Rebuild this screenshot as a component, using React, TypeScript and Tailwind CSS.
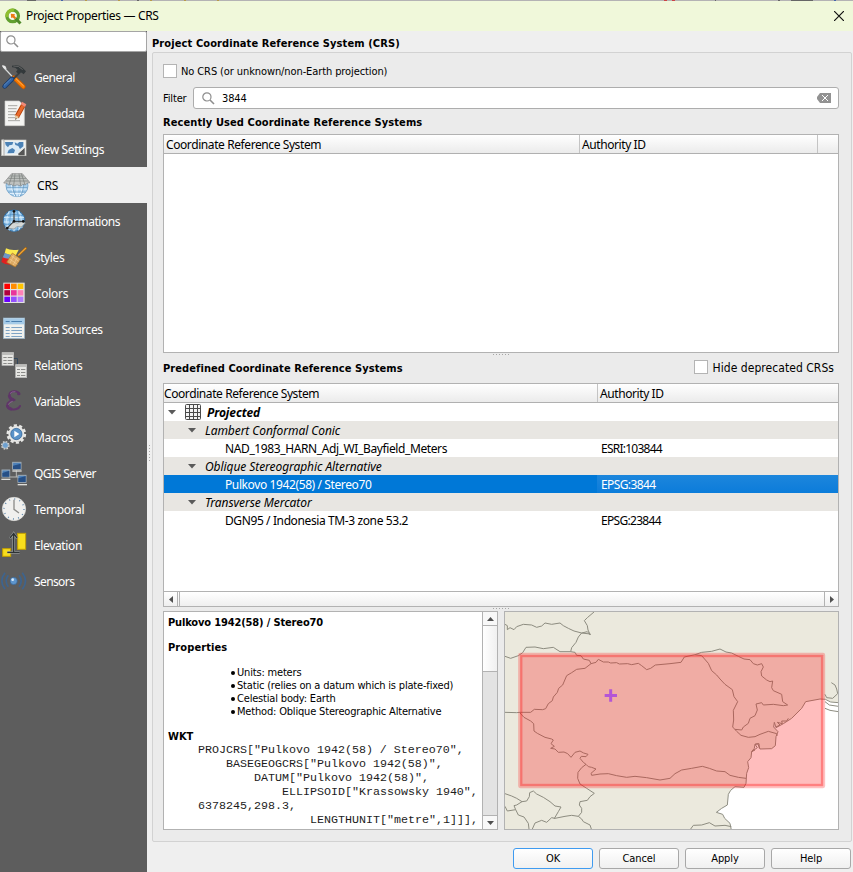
import React from 'react';
import clsx from 'clsx';

const UI = "font-['Noto_Sans',sans-serif]";
const TAHOMA = "font-['DejaVu_Sans_Condensed','DejaVu_Sans',sans-serif]";

/* ---------- sidebar icons, drawn on a 90x108 grid ---------- */

const GeneralIcon = () => (
  <>
    <path d="M10 24 L42 58" stroke="#d9dcdc" strokeWidth="4" />
    <path d="M7 18 l9 3 l4 8 l-5 1 l-8 -7z" fill="#e8e8e8" />
    <path d="M42 56 L70 83" stroke="#c65a00" strokeWidth="14" strokeLinecap="round" />
    <path d="M42 56 L70 83" stroke="#f57900" strokeWidth="9" strokeLinecap="round" />
    <path d="M46 57 L71 81" stroke="#ffb35c" strokeWidth="3" />
    <path d="M62 38 L40 60" stroke="#3c4244" strokeWidth="6" />
    <path d="M36 20 Q54 14 68 27 L78 37 L71 46 L62 39 L56 45 L48 38 L53 32 Q45 24 36 25z" fill="#33393b" />
    <path d="M40 21 Q56 18 68 32" fill="none" stroke="#666" strokeWidth="3" />
    <path d="M36 60 L14 82" stroke="#173a6d" strokeWidth="14" strokeLinecap="round" />
    <path d="M36 60 L14 82" stroke="#3465a4" strokeWidth="9" strokeLinecap="round" />
    <path d="M33 59 L12 79" stroke="#729fcf" strokeWidth="2" />
  </>
);

const MetadataIcon = () => (
  <>
    <path d="M15 18 H58 L73 34 V92 H15z" fill="#f4f4f2" stroke="#cfcfcb" strokeWidth="2" />
    <path d="M24 32H52M24 41H50M24 50H49M24 59H47M24 68H58M24 77H60" stroke="#a8a8a4" strokeWidth="3" />
    <path d="M70 30 L50 66" stroke="#b23c00" strokeWidth="14" />
    <path d="M69 32 L52 63" stroke="#e8692c" strokeWidth="9" />
    <path d="M66 20 L79 28 L75 36 L62 28z" fill="#f08a78" />
    <path d="M45 59 L57 66 L47 74z" fill="#e8c79a" />
    <path d="M47 69 L50 71 L46 75z" fill="#222" />
  </>
);

const ViewIcon = () => (
  <>
    <rect x="5" y="27" width="73" height="47" fill="#f2f2ef" stroke="#c8c8c4" strokeWidth="2" />
    <rect x="14" y="32" width="57" height="36" fill="#dcebf6" />
    <path d="M15 33 H40 L37 41 L28 43 L24 49 L17 42z" fill="#4b82b6" />
    <path d="M26 57 L37 51 L45 57 L42 66 L22 67z" fill="#4b82b6" />
    <path d="M44 34 L52 38 L58 33 H70 V46 L60 54 L55 45 L46 42z" fill="#4b82b6" />
    <path d="M54 68 L74 50 V73 H56z" fill="#555" />
    <path d="M54 68 L58 57 L74 50z" fill="#eaeae6" />
    <path d="M5 27 Q12 22 12 30 V75" fill="none" stroke="#aaa" strokeWidth="3" />
  </>
);

const CrsIcon = () => (
  <>
    <circle cx="51" cy="56" r="33" fill="#a9d0ee" stroke="#5d93bd" strokeWidth="2" />
    <path d="M51 45V89M36 45Q32 70 45 88M66 45Q70 70 57 88M22 66H80M29 79H73" fill="none" stroke="#e9f5ff" strokeWidth="3" />
    <path d="M39 45Q36 70 48 88M69 45Q73 70 60 88M20 62H82M26 75H76" fill="none" stroke="#5d93bd" strokeWidth="2" />
    <path d="M35 20 H67 L90 47 Q80 46 76 54 Q68 49 62 57 Q51 50 41 57 Q34 49 26 54 Q20 46 11 48z" fill="#bfc2c0" stroke="#808080" strokeWidth="2" />
    <path d="M31 27H71M25 34H78M18 42H85M45 20L41 56M57 20L62 56M38 20L27 53M64 20L75 53" fill="none" stroke="#777b78" strokeWidth="2" />
  </>
);

const TransformIcon = () => (
  <>
    <circle cx="42" cy="53" r="32" fill="#8fc1e8" stroke="#2f6ea5" strokeWidth="3" />
    <path d="M12 43H72M11 57H73M16 72H68M42 21V85M28 24Q12 53 28 82M56 24Q72 53 56 82" fill="none" stroke="#d6ecfb" strokeWidth="3" />
    <path d="M14 38Q42 30 70 38M14 64H70M35 22Q24 53 35 84M50 22Q62 53 50 84" fill="none" stroke="#4b8cc2" strokeWidth="2" />
    <path d="M25 76 Q34 54 52 60 Q64 54 76 60 L64 72 Q50 66 42 78z" fill="#d5d8d6" stroke="#8b8f8c" strokeWidth="2" />
    <path d="M42 24V55L70 55M42 55L22 75" fill="none" stroke="#222" strokeWidth="3" />
    <circle cx="42" cy="25" r="4" fill="#111" />
    <circle cx="42" cy="55" r="4" fill="#111" />
    <circle cx="70" cy="55" r="4" fill="#111" />
    <circle cx="22" cy="75" r="4" fill="#111" />
  </>
);

const StylesIcon = () => (
  <>
    <path d="M18 28 Q32 36 56 32 L46 52 Q28 48 14 43z" fill="#fce94f" />
    <path d="M14 42 Q26 48 42 48 L36 64 Q20 62 8 56z" fill="#6d97c7" />
    <path d="M8 55 Q20 62 36 58 L30 77 Q14 77 4 69z" fill="#e02020" />
    <path d="M56 48 L77 28" stroke="#a86100" strokeWidth="7" strokeLinecap="round" />
    <path d="M56 48 L77 28" stroke="#e8a33d" strokeWidth="4" strokeLinecap="round" />
    <path d="M37 42 L62 60 L46 84 L20 70z" fill="#dca962" stroke="#b07520" strokeWidth="2" />
    <path d="M34 50 L56 67M29 60L52 76M42 48L30 72M51 56L40 78" stroke="#f4cf94" strokeWidth="2" />
  </>
);

const swatches = ['#ff0000', '#ff8c00', '#ffc400', '#b00040', '#e8369b', '#ff80b8', '#6a00ff', '#9450ff', '#b07cff'];

const ColorsIcon = () => (
  <>
    <rect x="10" y="23" width="64" height="61" fill="#e3e3e0" />
    {swatches.map((c, i) => (
      <rect key={c} x={13 + (i % 3) * 20} y={26 + Math.floor(i / 3) * 19.5} width="17" height="16" fill={c} />
    ))}
  </>
);

const DataIcon = () => (
  <>
    <rect x="10" y="21" width="64" height="62" fill="#f0f1ee" stroke="#8ea8be" strokeWidth="2" />
    <rect x="11" y="22" width="62" height="18" fill="#a5cbe8" />
    <path d="M17 31.500H29M34 31.500H66" stroke="#4b80b0" strokeWidth="3" />
    <path d="M17 49.500H29M17 58.500H29M17 67.500H29M17 76.500H29M34 49.500H66M34 58.500H66M34 67.500H66M34 76.500H66" stroke="#7ea3c4" strokeWidth="3" />
  </>
);

const RelationsIcon = () => (
  <>
    <path d="M40 34.500H52.500V53" fill="none" stroke="#33475a" strokeWidth="3" />
    <rect x="6" y="17" width="35" height="38" fill="#e6e6e3" stroke="#bbb" strokeWidth="2" />
    <path d="M6 20H40" stroke="#bcbcba" strokeWidth="8" />
    <path d="M10 31.500H20M10 40.500H20M10 49.500H20M23 31.500H37M23 40.500H37M23 49.500H37" stroke="#8a8a88" strokeWidth="3" />
    <rect x="47" y="53" width="33" height="39" fill="#e6e6e3" stroke="#bbb" strokeWidth="2" />
    <path d="M47 56H80" stroke="#bcbcba" strokeWidth="8" />
    <path d="M51 67.500H60M51 76.500H60M51 85.500H60M63 67.500H76M63 76.500H76M63 85.500H76" stroke="#8a8a88" strokeWidth="3" />
  </>
);

const VariablesIcon = () => (
  <>
    <path d="M58 33C54 21 28 21 28 37C28 48 37 51 46 51C34 51 22 56 22 67C22 83 54 83 60 69" fill="none" stroke="#5f3568" strokeWidth="6" strokeLinecap="round" />
    <path d="M28 37C28 46 35 49 41 50M22 66C22 73 28 77 36 79" fill="none" stroke="#5f3568" strokeWidth="9" />
    <circle cx="56" cy="32" r="5" fill="#5f3568" />
    <path d="M30 32Q36 25 46 26M25 65Q28 57 38 55" fill="none" stroke="#9a6ba3" strokeWidth="2" />
  </>
);

const MacrosIcon = () => (
  <>
    <circle cx="49" cy="45" r="26" fill="none" stroke="#e8e8e6" strokeWidth="7" strokeDasharray="9.5 6.8" />
    <circle cx="49" cy="45" r="20" fill="#4c86bd" stroke="#e8e8e6" strokeWidth="8" />
    <circle cx="49" cy="45" r="17" fill="#5b93c8" stroke="#2d5f94" strokeWidth="2" />
    <path d="M43 35L58 45L43 55z" fill="#fff" />
    <circle cx="16" cy="79" r="11" fill="none" stroke="#d8d8d6" strokeWidth="4" strokeDasharray="5 3.6" />
    <circle cx="16" cy="79" r="9" fill="#6ea0cf" stroke="#d8d8d6" strokeWidth="2" />
  </>
);

const ServerIcon = () => (
  <>
    <path d="M49 46V66M26 66H60" stroke="#b8b8b5" strokeWidth="3" />
    <rect x="38" y="22" width="25" height="21" fill="#4d81b9" stroke="#9dabb7" strokeWidth="3" />
    <path d="M39 32L62 26V42H39z" fill="#264f86" />
    <path d="M37 48H65" stroke="#dededb" strokeWidth="4" />
    <rect x="6" y="45" width="23" height="21" fill="#4d81b9" stroke="#9dabb7" strokeWidth="3" />
    <path d="M7 54L28 47V65H7z" fill="#264f86" />
    <path d="M4 73H31" stroke="#dededb" strokeWidth="4" />
    <rect x="54" y="61" width="24" height="21" fill="#4d81b9" stroke="#9dabb7" strokeWidth="3" />
    <path d="M55 70L77 63V81H55z" fill="#264f86" />
    <path d="M53 89H81" stroke="#dededb" strokeWidth="4" />
  </>
);

const TemporalIcon = () => (
  <>
    <circle cx="42" cy="54" r="35" fill="#f0f0ee" stroke="#dcdcda" strokeWidth="2" />
    <circle cx="42" cy="54" r="30" fill="none" stroke="#5b86ac" strokeWidth="4" strokeDasharray="3 12.7" />
    <path d="M42 26V55L57 66" fill="none" stroke="#8d8d8a" strokeWidth="4" />
  </>
);

const ElevationIcon = () => (
  <>
    <rect x="53" y="19" width="24" height="48" fill="#f8de1c" stroke="#c4a000" strokeWidth="3" />
    <rect x="8" y="65" width="24" height="23" fill="#f8de1c" stroke="#c4a000" strokeWidth="3" />
    <path d="M41 76V22M30 34L41 19L51 34M22 76H59" fill="none" stroke="#a5a9a9" strokeWidth="7" />
    <path d="M41 76V20M30 33L41 19L51 33M22 76H59" fill="none" stroke="#2e3436" strokeWidth="4" />
  </>
);

const SensorsIcon = () => (
  <>
    <circle cx="41" cy="54" r="11" fill="#5e95cc" stroke="#355f8c" strokeWidth="2" />
    <circle cx="38" cy="50" r="4" fill="#d8ebfb" />
    <path d="M25 37Q12 54 25 71M57 37Q70 54 57 71M15 29Q-4 54 15 79M67 29Q86 54 67 79" fill="none" stroke="#3d648f" strokeWidth="5" />
  </>
);

const sections = [
  { label: 'General', Icon: GeneralIcon, cls: 'tracking-[-0.5px]' },
  { label: 'Metadata', Icon: MetadataIcon, cls: 'tracking-[-0.45px]' },
  { label: 'View Settings', Icon: ViewIcon, cls: 'tracking-[-0.37px]' },
  { label: 'CRS', Icon: CrsIcon, cls: 'tracking-[-0.1px]' },
  { label: 'Transformations', Icon: TransformIcon, cls: 'tracking-[-0.45px]' },
  { label: 'Styles', Icon: StylesIcon, cls: 'tracking-[-0.4px]' },
  { label: 'Colors', Icon: ColorsIcon, cls: 'tracking-[-0.3px]' },
  { label: 'Data Sources', Icon: DataIcon, cls: 'tracking-[-0.45px]' },
  { label: 'Relations', Icon: RelationsIcon, cls: 'tracking-[-0.4px]' },
  { label: 'Variables', Icon: VariablesIcon, cls: 'tracking-[-0.6px]' },
  { label: 'Macros', Icon: MacrosIcon, cls: 'tracking-[-0.3px]' },
  { label: 'QGIS Server', Icon: ServerIcon, cls: 'tracking-[-0.55px]' },
  { label: 'Temporal', Icon: TemporalIcon, cls: 'tracking-[-0.35px]' },
  { label: 'Elevation', Icon: ElevationIcon, cls: 'tracking-[-0.35px]' },
  { label: 'Sensors', Icon: SensorsIcon, cls: 'tracking-[-0.6px]' },
];

const SearchIcon = () => (
  <svg width="13" height="13" viewBox="0 0 13 13" fill="none" stroke="#8e8e8e" strokeWidth="1.2">
    <circle cx="4.9" cy="4.9" r="4.1" />
    <path d="M8 8L12 12" strokeWidth="1.6" />
  </svg>
);

const Checkbox = () => <span className="block size-[14px] shrink-0 border border-[#b4b4b4] bg-white" />;

const Sidebar = () => (
  <aside className="flex w-[147px] shrink-0 flex-col bg-[#5d5d5d]">
    <div className="flex h-[21px] items-center rounded-[2px] border border-[#a5a5a5] bg-white pl-[5px]">
      <SearchIcon />
    </div>
    <nav className="pt-[7px]">
      {sections.map(({ label, Icon, cls }) => (
        <div
          key={label}
          className={clsx('flex h-9 items-center', label === 'CRS' ? 'bg-[#efefef] text-black' : 'text-white')}
        >
          <svg width="30" height="36" viewBox="0 0 90 108" className="shrink-0">
            <Icon />
          </svg>
          <span className={clsx('whitespace-nowrap pt-0.5 text-[12px]', cls, label === 'CRS' ? 'pl-[7px]' : 'pl-1')}>{label}</span>
        </div>
      ))}
    </nav>
  </aside>
);

const HEADER = 'flex h-[19px] shrink-0 items-center border-b border-[#b0b0b0] bg-linear-to-b from-white to-[#ebebeb] text-[12px] tracking-[-0.41px]';

const RecentTable = () => (
  <div className="h-[219px] border border-[#b2b2b2] bg-white">
    <div className={HEADER}>
      <span className="w-[416px] self-stretch border-r border-[#c4c4c4] pl-0.5 leading-[19px]">Coordinate Reference System</span>
      <span className="w-[238px] self-stretch border-r border-[#c4c4c4] pl-0.5 leading-[19px]">Authority ID</span>
    </div>
  </div>
);

interface CrsRow {
  name: string;
  kind: 'root' | 'group' | 'leaf';
  id?: string;
  idCls?: string;
  selected?: boolean;
}

const rows: CrsRow[] = [
  { name: 'Projected', kind: 'root' },
  { name: 'Lambert Conformal Conic', kind: 'group' },
  { name: 'NAD_1983_HARN_Adj_WI_Bayfield_Meters', kind: 'leaf', id: 'ESRI:103844', idCls: 'tracking-[-0.75px]' },
  { name: 'Oblique Stereographic Alternative', kind: 'group' },
  { name: 'Pulkovo 1942(58) / Stereo70', kind: 'leaf', id: 'EPSG:3844', idCls: 'tracking-[-0.6px]', selected: true },
  { name: 'Transverse Mercator', kind: 'group' },
  { name: 'DGN95 / Indonesia TM-3 zone 53.2', kind: 'leaf', id: 'EPSG:23844', idCls: 'tracking-[-0.7px]' },
];

const Caret = () => (
  <svg width="8" height="5" viewBox="0 0 8 5" className="shrink-0">
    <path d="M0 0H8L4 4.6z" fill="#5a5a5a" />
  </svg>
);

const GridIcon = () => (
  <svg width="16" height="16" viewBox="0 0 16 16" fill="none" stroke="#4a4a4a">
    <rect x="0.5" y="0.5" width="15" height="15" rx="1" fill="#f4f4f4" />
    <path d="M4.500 0V16M8.500 0V16M12.500 0V16M0 4.500H16M0 8.500H16M0 12.500H16" />
  </svg>
);

const Row = ({ row }: { row: CrsRow }) => (
  <div
    className={clsx(
      'flex h-[18px] items-center whitespace-nowrap text-[12px]',
      row.kind === 'group' && 'bg-[#e8e6e2]',
      row.selected ? 'bg-[#0078d7] text-white' : 'text-black',
    )}
  >
    <div className="flex w-[433px] items-center">
      {row.kind === 'root' && (
        <div className="flex items-center pl-1">
          <Caret />
          <span className="ml-[9px]"><GridIcon /></span>
          <span className="ml-[6px] pt-0.5 font-bold italic tracking-[-0.1px]">{row.name}</span>
        </div>
      )}
      {row.kind === 'group' && (
        <div className="flex items-center pl-[24px]">
          <Caret />
          <span className="ml-[9px] pt-0.5 italic tracking-[-0.07px]">{row.name}</span>
        </div>
      )}
      {row.kind === 'leaf' && <span className="pl-[61px] pt-0.5 tracking-[-0.39px]">{row.name}</span>}
    </div>
    <div className={clsx('flex-1 self-stretch pl-1 leading-[20px]', row.idCls, row.selected && 'bg-linear-to-b from-[#1c86dc] to-[#0b7cda]')}>
      {row.id}
    </div>
  </div>
);

const PredefinedTable = () => (
  <div className="flex h-[224px] flex-col border border-[#b2b2b2] bg-white">
    <div className={HEADER}>
      <span className="w-[434px] self-stretch border-r border-[#c4c4c4] leading-[19px]">Coordinate Reference System</span>
      <span className="pl-0.5 leading-[19px]">Authority ID</span>
    </div>
    <div className="flex-1">
      {rows.map((row) => (
        <Row key={row.name} row={row} />
      ))}
    </div>
    <div className="flex h-[15px] border-t border-[#b2b2b2] bg-linear-to-b from-white to-[#efefef]">
      <div className="flex w-[14px] items-center justify-center border-r border-[#b2b2b2]">
        <svg width="4" height="7" viewBox="0 0 4 7"><path d="M4 0V7L0 3.500z" fill="#505050" /></svg>
      </div>
      <div className="ml-px flex-1 border-l border-[#b2b2b2]" />
      <div className="flex w-[14px] items-center justify-center border-l border-[#b2b2b2]">
        <svg width="4" height="7" viewBox="0 0 4 7"><path d="M0 0V7L4 3.500z" fill="#505050" /></svg>
      </div>
    </div>
  </div>
);

const Grip = ({ className }: { className: string }) => (
  <div className={clsx('flex gap-0.5', className)}>
    {[0, 1, 2, 3, 4, 5].map((n) => (
      <span key={n} className="size-px bg-[#a6a6a6]" />
    ))}
  </div>
);

const wkt = [
  { text: 'PROJCRS["Pulkovo 1942(58) / Stereo70",', pad: 'pl-0' },
  { text: 'BASEGEOGCRS["Pulkovo 1942(58)",', pad: 'pl-[28px]' },
  { text: 'DATUM["Pulkovo 1942(58)",', pad: 'pl-[56px]' },
  { text: 'ELLIPSOID["Krassowsky 1940",', pad: 'pl-[84px]' },
  { text: '6378245,298.3,', pad: 'pl-0' },
  { text: 'LENGTHUNIT["metre",1]]],', pad: 'pl-[112px]' },
];

const Details = () => (
  <div className="flex w-[335px] shrink-0 border border-[#b2b2b2] bg-white">
    <div className={clsx('min-w-0 flex-1 overflow-hidden whitespace-nowrap pl-1 text-[11px] leading-[13px]', TAHOMA)}>
      <p className="pt-[4px] font-bold tracking-[-0.15px]">Pulkovo 1942(58) / Stereo70</p>
      <p className="pt-[12px] font-bold tracking-[0.1px]">Properties</p>
      <ul className="pl-[63px] pt-[12px] tracking-[-0.18px]">
        {['Units: meters', 'Static (relies on a datum which is plate-fixed)', 'Celestial body: Earth', 'Method: Oblique Stereographic Alternative'].map((t) => (
          <li key={t} className="flex items-center gap-[2px]">
            <span className="size-1 rounded-full bg-black" />
            <span>{t}</span>
          </li>
        ))}
      </ul>
      <p className="pt-[12px] font-bold">WKT</p>
      <div className="pl-[30px] font-['Liberation_Mono',monospace] text-[11.67px] leading-[14px] text-[#1c1c1c]">
        {wkt.map((l) => (
          <p key={l.text} className={l.pad}>{l.text}</p>
        ))}
      </div>
    </div>
    <div className="flex w-[15px] shrink-0 flex-col border-l border-[#b2b2b2] bg-[#e3e3e3]">
      <div className="flex h-[14px] items-center justify-center border-b border-[#b2b2b2] bg-[#f8f8f8]">
        <svg width="7" height="4" viewBox="0 0 7 4"><path d="M0 4H7L3.500 0z" fill="#505050" /></svg>
      </div>
      <div className="h-[46px] border-b border-[#b2b2b2] bg-linear-to-r from-white to-[#f0f0f0]" />
      <div className="flex-1" />
      <div className="flex h-[14px] items-center justify-center border-t border-[#b2b2b2] bg-[#f8f8f8]">
        <svg width="7" height="4" viewBox="0 0 7 4"><path d="M0 0H7L3.500 4z" fill="#505050" /></svg>
      </div>
    </div>
  </div>
);

/* Extent preview: land, borders, Black Sea and the CRS bounds on top */
const ExtentMap = () => (
  <div className="w-[335px] shrink-0 border border-[#b2b2b2]">
    <svg width="333" height="217" viewBox="15 21 999 651" className="block">
      <rect x="0" y="0" width="1030" height="700" fill="#ebe9dd" />
      <path
        transform="translate(510 0)"
        d="M520 300L505 293L482 291L466 283L450 282L407 290L395 310L365 340L340 356L318 368L313 352L311 366L324 380L318 395L316 422L305 431L270 432L263 416L255 418L253 430L245 440L243 458L233 470L236 488L230 505L228 535L222 547L195 545L182 556L175 568L172 600L155 610L139 622L158 628L164 640L180 655L184 675L520 680z"
        fill="#fff"
        stroke="#8f8f84"
        strokeWidth="3"
      />
      <g fill="none" stroke="#8d8c80" strokeWidth="3" strokeLinejoin="round">
        <path d="M15 58L22 62L22 74L30 68L42 74L50 65L70 58L95 60L110 67L125 63L135 54L155 58L180 54L190 62L205 70L222 78L245 84L262 80L271 90L264 75L262 62L253 47L262 38L282 21" />
        <path d="M15 154L32 160L55 152L68 143L78 127L105 126L130 131L160 127L180 140L212 140L215 128L228 112L235 96L245 84L271 87" />
        <path d="M212 140L225 142L230 151L243 152L250 162L268 166L273 176L288 172L295 163L310 171L325 171L332 174L350 173L358 177L383 176L395 179L415 175L425 182L440 194L452 190L466 180L510 176L543 172L553 156L585 149" />
        <path d="M273 176L255 190L230 193L215 203L200 212L188 240L176 250L172 262L160 276L157 287L145 296L137 311L128 314L103 313L92 322L60 322L50 323L15 322" />
        <path d="M60 324L72 337L92 348L101 356L102 378L112 385L135 397L155 402L160 405L153 416L163 424L152 430L165 432L175 442L192 441L203 446L213 457L225 442L240 438L251 444L264 448L258 455L244 454L240 460L250 472L258 478L265 485L275 487L288 492L273 505L275 511L300 507L325 506L350 512L380 517L405 514L440 518L480 525L510 520L525 506L545 495L575 490L607 484L628 490L650 498L675 500L690 511L715 517L738 520" />
        <path d="M258 478L245 488L234 502L233 520L240 537L260 550L283 565L270 575L262 586L240 590L238 600L245 610L245 622L235 634L215 631L195 634L165 640L155 638L140 652L125 646L105 654L97 672" />
        <path d="M235 634L245 642L250 650L270 660L274 672" />
        <path d="M15 566L35 573L50 580L66 590L80 588L88 575L89 563L100 558L110 567L130 577L150 590L165 603L183 606L175 620L162 642M66 590L50 600L42 602L47 614L55 630L72 636L85 655L87 672M15 604L22 618L47 614" />
        <g transform="translate(510 0)">
          <path d="M75 149L95 142L125 139L150 132L168 141L185 144L205 154L222 162L240 164L250 176L262 180L275 176L280 186L273 200L275 213L290 225L300 230L308 228L305 248L310 257L335 268L338 290L353 300L340 302L310 298L280 300L275 293L258 297L262 315L255 332L240 340L235 355L220 366L215 375L195 373" />
          <path d="M75 149L95 152L115 175L125 197L140 210L150 222L165 238L187 254L192 275L203 290L190 316L191 345L188 366L200 379L213 391L235 397L255 395L270 388L295 379L320 386L322 392" />
          <path d="M318 366L330 360L322 352L337 356L335 348L350 348L355 340M255 435L245 440L262 428L255 418L267 416L268 430M484 233L495 240L500 252L503 266L488 280L470 278L465 268M465 290L478 300L505 304M465 310L480 316L505 320" />
          <path d="M62 672L70 661L95 660L118 653L135 663L165 661L184 665" />
        </g>
      </g>
      <rect x="60" y="149" width="910" height="395" rx="2" fill="#ff0000" fillOpacity="0.26" />
      <rect x="61" y="150" width="908" height="393" fill="none" stroke="#ff2020" strokeOpacity="0.28" strokeWidth="13" strokeLinejoin="round" />
      <rect x="64" y="153" width="902" height="387" fill="none" stroke="#ff2020" strokeOpacity="0.18" strokeWidth="5" />
      <path d="M332 253V290M314 271.500H351" stroke="#b455d6" strokeWidth="9" />
    </svg>
  </div>
);

const QgisLogo = () => (
  <svg width="17" height="17" viewBox="0 0 17 17" className="shrink-0">
    <circle cx="7.700" cy="7.900" r="5.800" fill="#f6f9ea" stroke="#62a030" strokeWidth="3.200" />
    <path d="M2 9A5.800 5.800 0 0 1 9 2.200" fill="none" stroke="#8fbf2f" strokeWidth="3.200" />
    <path d="M10.500 10.500L15.500 15.500" stroke="#4f8a2a" strokeWidth="3" />
    <path d="M5.800 5.800L10 6.200L9.400 7.800L11.200 9.800L9.800 11.200L7.800 9.400L6.200 10z" fill="#ee7913" />
  </svg>
);

const BUTTON = 'flex h-[21px] w-[80px] items-center justify-center rounded-[3px] border bg-linear-to-b from-white to-[#f0f0f0] pt-[2px] text-[11px] tracking-[-0.1px]';

const App: React.FC = () => {
  return (
    <div className={clsx('flex h-[872px] w-[853px] flex-col overflow-hidden bg-[#efefef] text-black', UI)}>
      {/* sliver of the parent window's toolbar */}
      <svg width="853" height="1" viewBox="0 0 853 1" className="block shrink-0">
        <rect width="853" height="1" fill="#b4b3b4" />
        <path d="M27 .5h9M137 .5h2M715 .5h1M778 .5h2M791 .5h22" stroke="#666" />
        <path d="M85 .5h2M118 .5h2M150 .5h2M184 .5h2M217 .5h2" stroke="#b89a4a" />
        <path d="M664 .5h3M672 .5h3" stroke="#c44" />
        <path d="M61 .5h2M834 .5h2" stroke="#46a" />
      </svg>
      <header className="flex h-[30px] shrink-0 items-center bg-[#f0f8da] pl-[5px] pr-[9px]">
        <QgisLogo />
        <span className="pl-1 text-[12px] tracking-[-0.33px]">Project Properties — CRS</span>
        <svg width="10" height="10" viewBox="0 0 10 10" className="ml-auto">
          <path d="M0 0L10 10M10 0L0 10" stroke="#111" strokeWidth="1.200" />
        </svg>
      </header>

      <div className="flex min-h-0 flex-1">
        <Sidebar />
        <div className="flex w-[5px] shrink-0 items-center justify-center">
          <Grip className="flex-col pt-0.5" />
        </div>
        <main className="flex flex-1 flex-col pr-0.5">
          <h1 className={clsx('h-[21px] text-[11px] font-bold leading-[26px] tracking-[0.1px]', TAHOMA)}>Project Coordinate Reference System (CRS)</h1>
          <section className="flex h-[790px] flex-col rounded-[2px] border border-[#d2d2d2] bg-[#ebebeb] pl-[10px] pr-[12px]">
            <label className={clsx('mt-[11px] flex items-center gap-1 text-[11px] leading-[14px] tracking-[-0.1px]', TAHOMA)}>
              <Checkbox />
              <span className="-mb-0.5">No CRS (or unknown/non-Earth projection)</span>
            </label>
            <div className={clsx('mt-[9px] flex items-center text-[11px] tracking-[-0.15px]', TAHOMA)}>
              <span className="w-[30px] pt-0.5">Filter</span>
              <div className="flex h-[22px] flex-1 items-center rounded-[3px] border border-[#adadad] bg-white pl-2 pr-[7px]">
                <SearchIcon />
                <span className="ml-[7px] pt-0.5">3844</span>
                <svg width="14" height="10" viewBox="0 0 14 10" className="ml-auto">
                  <path d="M3 0H14V10H3L0 6V4z" fill="#929292" />
                  <path d="M5 2L11 8M11 2L5 8" stroke="#fff" />
                </svg>
              </div>
            </div>
            <h2 className={clsx('mt-[6px] h-[19px] text-[11px] font-bold leading-[15px] tracking-[0.1px]', TAHOMA)}>Recently Used Coordinate Reference Systems</h2>
            <RecentTable />
            <Grip className="h-[8px] justify-center pt-px" />
            <div className={clsx('flex h-[22px] items-start justify-between', TAHOMA)}>
              <h2 className="text-[11px] font-bold leading-[16px] tracking-[0.08px]">Predefined Coordinate Reference Systems</h2>
              <label className="-mt-px flex items-center gap-[5px] pr-[5px] text-[12px] leading-[14px] tracking-[0.05px]">
                <Checkbox />
                <span className="-mb-px">Hide deprecated CRSs</span>
              </label>
            </div>
            <PredefinedTable />
            <Grip className="h-[4px] justify-center pt-px" />
            <div className="flex h-[219px] gap-[6px]">
              <Details />
              <ExtentMap />
            </div>
          </section>
          <footer className={clsx('mt-[6px] flex justify-end gap-[6px] pr-px', TAHOMA)}>
            <button className={clsx(BUTTON, 'border-[#3f9bf0]')}>OK</button>
            <button className={clsx(BUTTON, 'border-[#a8a8a8]')}>Cancel</button>
            <button className={clsx(BUTTON, 'border-[#a8a8a8]')}>Apply</button>
            <button className={clsx(BUTTON, 'border-[#a8a8a8]')}>Help</button>
          </footer>
        </main>
      </div>
    </div>
  );
};

export default App;
